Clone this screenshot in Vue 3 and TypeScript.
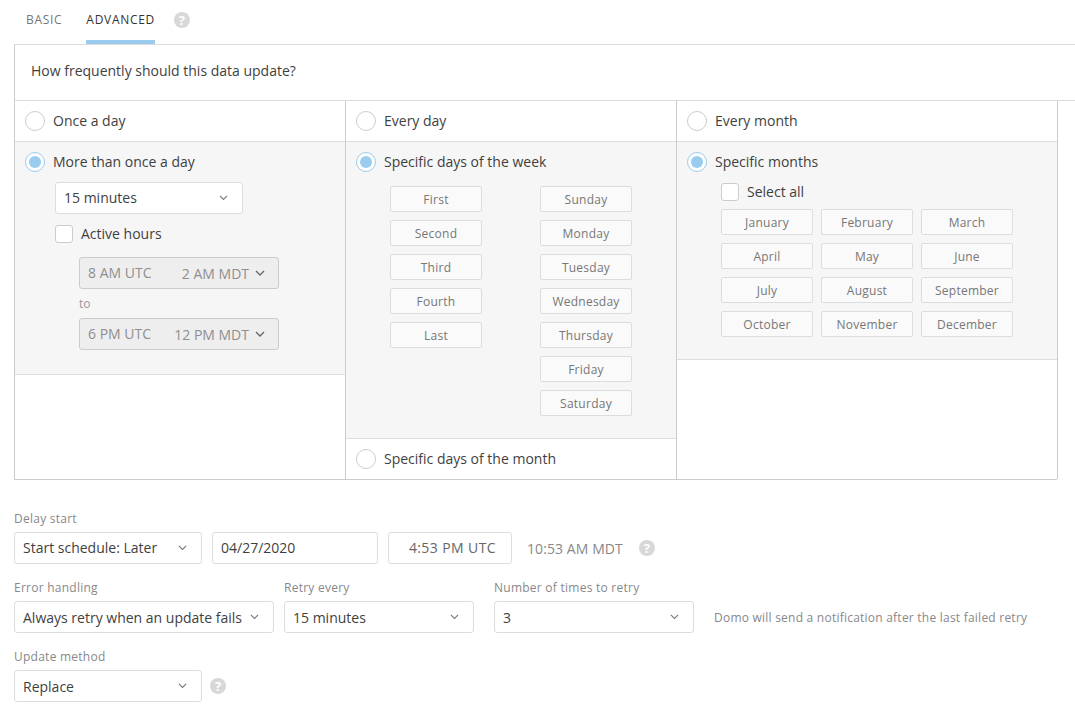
<script setup lang="ts">
const ordinals: string[] = ['First', 'Second', 'Third', 'Fourth', 'Last']
const weekdays: string[] = ['Sunday', 'Monday', 'Tuesday', 'Wednesday', 'Thursday', 'Friday', 'Saturday']
const months: string[] = ['January', 'February', 'March', 'April', 'May', 'June', 'July', 'August', 'September', 'October', 'November', 'December']
const chevron = 'M1 1l4 4 4-4'
</script>

<template>
  <div class="page">
    <nav class="tabs">
      <span class="tab">BASIC</span>
      <span class="tab active">ADVANCED</span>
      <span class="help tab-help">?</span>
    </nav>

    <section class="panel">
      <div class="question">How frequently should this data update?</div>
      <div class="columns">
        <div class="col">
          <label class="row"><span class="radio"></span>Once a day</label>
          <div class="selected first-body">
            <label class="sel-label"><span class="radio on"></span>More than once a day</label>
            <div class="indent">
              <div class="select w188">
                <span>15 minutes</span>
                <svg class="chev" viewBox="0 0 10 6"><path :d="chevron" /></svg>
              </div>
              <label class="check active-hours"><span class="box"></span>Active hours</label>
              <div class="range">
                <div class="time-select">
                  <span class="left">8 AM UTC</span><span class="right">2 AM MDT</span>
                  <svg class="chev dark" viewBox="0 0 10 6"><path :d="chevron" /></svg>
                </div>
                <div class="to">to</div>
                <div class="time-select">
                  <span class="left">6 PM UTC</span><span class="right">12 PM MDT</span>
                  <svg class="chev dark" viewBox="0 0 10 6"><path :d="chevron" /></svg>
                </div>
              </div>
            </div>
          </div>
        </div>

        <div class="col">
          <label class="row"><span class="radio"></span>Every day</label>
          <div class="selected week-body">
            <label class="sel-label"><span class="radio on"></span>Specific days of the week</label>
            <div class="week-grid">
              <div class="stack">
                <button v-for="o in ordinals" :key="o" class="chip" type="button">{{ o }}</button>
              </div>
              <div class="stack">
                <button v-for="d in weekdays" :key="d" class="chip" type="button">{{ d }}</button>
              </div>
            </div>
          </div>
          <label class="row last"><span class="radio"></span>Specific days of the month</label>
        </div>

        <div class="col end">
          <label class="row"><span class="radio"></span>Every month</label>
          <div class="selected month-body">
            <label class="sel-label"><span class="radio on"></span>Specific months</label>
            <label class="check select-all"><span class="box"></span>Select all</label>
            <div class="month-grid">
              <button v-for="m in months" :key="m" class="chip" type="button">{{ m }}</button>
            </div>
          </div>
        </div>
      </div>
    </section>

    <section class="form">
      <div class="field-label">Delay start</div>
      <div class="form-row">
        <div class="select w188">
          <span>Start schedule: Later</span>
          <svg class="chev" viewBox="0 0 10 6"><path :d="chevron" /></svg>
        </div>
        <div class="select w166">04/27/2020</div>
        <div class="select w124 time">4:53 PM UTC</div>
        <span class="local">10:53 AM MDT</span>
        <span class="help delay-help">?</span>
      </div>

      <div class="retry">
        <div class="retry-field">
          <div class="field-label">Error handling</div>
          <div class="select low w260">
            <span>Always retry when an update fails</span>
            <svg class="chev" viewBox="0 0 10 6"><path :d="chevron" /></svg>
          </div>
        </div>
        <div class="retry-field">
          <div class="field-label">Retry every</div>
          <div class="select low w190">
            <span>15 minutes</span>
            <svg class="chev" viewBox="0 0 10 6"><path :d="chevron" /></svg>
          </div>
        </div>
        <div class="retry-field">
          <div class="field-label">Number of times to retry</div>
          <div class="select low w200">
            <span>3</span>
            <svg class="chev" viewBox="0 0 10 6"><path :d="chevron" /></svg>
          </div>
        </div>
        <div class="note">Domo will send a notification after the last failed retry</div>
      </div>

      <div class="field-label method-label">Update method</div>
      <div class="form-row">
        <div class="select low w188">
          <span>Replace</span>
          <svg class="chev" viewBox="0 0 10 6"><path :d="chevron" /></svg>
        </div>
        <span class="help method-help">?</span>
      </div>
    </section>
  </div>
</template>

<style>
html, body { margin: 0; background: #fff; }
</style>

<style scoped>
.page {
  width: 1075px;
  height: 709px;
  overflow: hidden;
  font-family: "Open Sans", "Liberation Sans", sans-serif;
  font-size: 14px;
  color: #3f3f3f;
  box-sizing: border-box;
}
.tabs {
  height: 44px;
  display: flex;
  align-items: flex-start;
  padding-left: 26px;
  box-sizing: border-box;
}
.tab {
  height: 44px;
  box-sizing: border-box;
  font-size: 12px;
  line-height: 40px;
  letter-spacing: 0.7px;
  color: #777;
  margin-right: 24px;
}
.tab.active {
  color: #333;
  border-bottom: 4px solid #99ccee;
  margin-right: 19px;
}
.help {
  width: 16px;
  height: 16px;
  border-radius: 50%;
  background: #d8d8d8;
  color: #fff;
  font-size: 13px;
  font-weight: 700;
  line-height: 16px;
  text-align: center;
  flex: none;
  display: block;
}
.tab-help { margin-top: 12px; }
.panel { margin-left: 14px; }
.question {
  height: 55px;
  line-height: 51px;
  border-top: 1px solid #ddd;
  border-left: 1px solid #ccc;
  border-bottom: 1px solid #ddd;
  padding-left: 16px;
}
.columns {
  display: grid;
  grid-template-columns: 331px 331px 381px;
  width: 1043px;
  height: 379px;
  border-left: 1px solid #ccc;
  border-bottom: 1px solid #ccc;
  box-sizing: border-box;
}
.col {
  border-right: 1px solid #ccc;
  display: flex;
  flex-direction: column;
  box-sizing: border-box;
  min-width: 0;
}
.row {
  height: 41px;
  flex: none;
  display: flex;
  align-items: center;
  padding: 0 0 2px 10px;
  box-sizing: border-box;
  border-bottom: 1px solid #ddd;
}
.row.last { border-bottom: 0; height: 40px; }
.radio {
  width: 20px;
  height: 20px;
  box-sizing: border-box;
  border: 1px solid #ccc;
  border-radius: 50%;
  background: #fff;
  margin: 0 8px -2px 0;
  flex: none;
  position: relative;
}
.radio.on { border-color: #99ccee; }
.radio.on::after {
  content: "";
  position: absolute;
  left: 3px;
  top: 3px;
  width: 12px;
  height: 12px;
  border-radius: 50%;
  background: #99ccee;
}
.selected {
  background: #f6f6f6;
  border-bottom: 1px solid #ddd;
  box-sizing: border-box;
  flex: none;
}
.sel-label {
  display: flex;
  align-items: center;
  height: 20px;
  box-sizing: border-box;
  padding: 0 0 2px 10px;
}
.first-body { height: 233px; padding-top: 10px; }
.indent { padding-left: 40px; }
.indent .select { margin-top: 10px; }
.select {
  height: 32px;
  box-sizing: border-box;
  background: #fff;
  border: 1px solid #ddd;
  border-radius: 3px;
  display: flex;
  align-items: center;
  justify-content: space-between;
  padding: 0 8px;
  line-height: 30px;
  white-space: nowrap;
  flex: none;
}
.select.low { padding-top: 2px; }
.select.low .chev { margin-bottom: 2px; }
.w188 { width: 188px; }
.w166 { width: 166px; }
.w124 { width: 124px; }
.w260 { width: 260px; }
.w190 { width: 190px; }
.w200 { width: 200px; }
.select.time { color: #666; justify-content: flex-end; padding-right: 15px; letter-spacing: 0.4px; }
.chev {
  width: 9px;
  height: 5.4px;
  margin-right: 6px;
  flex: none;
  fill: none;
  stroke: #777;
  stroke-width: 1.2;
}
.chev.dark { stroke: #666; width: 10px; height: 6px; margin: 0 0 1px 6px; stroke-width: 1.3; }
.check {
  display: flex;
  align-items: center;
  height: 18px;
  box-sizing: border-box;
  padding-bottom: 2px;
}
.box {
  width: 18px;
  height: 18px;
  box-sizing: border-box;
  border: 1px solid #ccc;
  border-radius: 3px;
  background: #fff;
  margin: 0 8px -2px 0;
  flex: none;
}
.active-hours { margin-top: 11px; }
.range { padding-left: 24px; margin-top: 14px; }
.time-select {
  width: 200px;
  height: 32px;
  box-sizing: border-box;
  background: #eeeeee;
  border: 1px solid #ccc;
  border-radius: 3px;
  display: flex;
  align-items: center;
  padding: 0 13px 0 8px;
  color: #8f8f8f;
  white-space: nowrap;
}
.time-select .left { padding-bottom: 2px; }
.time-select .right { margin-left: auto; }
.to {
  font-size: 12px;
  color: #999;
  height: 29px;
  line-height: 29px;
}
.week-body { height: 297px; padding-top: 10px; }
.week-grid {
  display: flex;
  gap: 58px;
  padding: 14px 0 0 44px;
}
.stack {
  display: flex;
  flex-direction: column;
  gap: 8px;
  width: 92px;
}
.chip {
  width: 92px;
  height: 26px;
  box-sizing: border-box;
  border: 1px solid #ddd;
  border-radius: 2px;
  background: #fafafa;
  color: #777;
  font-family: inherit;
  font-size: 12px;
  letter-spacing: 0.25px;
  padding: 0;
  text-align: center;
}
.month-body { height: 218px; padding-top: 10px; }
.select-all { margin: 11px 0 0 44px; }
.month-grid {
  display: grid;
  grid-template-columns: repeat(3, 92px);
  gap: 8px;
  margin: 8px 0 0 44px;
}
.form { padding: 31px 0 0 14px; }
.field-label {
  font-size: 12px;
  line-height: 16px;
  letter-spacing: 0.25px;
  color: #888;
  height: 16px;
  margin-bottom: 5px;
}
.form-row {
  display: flex;
  align-items: center;
  gap: 10px;
}
.local { color: #888; margin-left: 5px; letter-spacing: 0.08px; }
.delay-help { margin-left: 6px; }
.method-help { margin-left: -2px; }
.retry {
  display: flex;
  align-items: flex-end;
  gap: 10px;
  margin-top: 16px;
}
.retry-field + .retry-field + .retry-field { margin-left: 10px; }
.note {
  font-size: 12px;
  color: #888;
  line-height: 30px;
  padding-top: 2px;
  margin-left: 10px;
  letter-spacing: 0.23px;
  white-space: nowrap;
}
.method-label { margin-top: 16px; }
</style>
